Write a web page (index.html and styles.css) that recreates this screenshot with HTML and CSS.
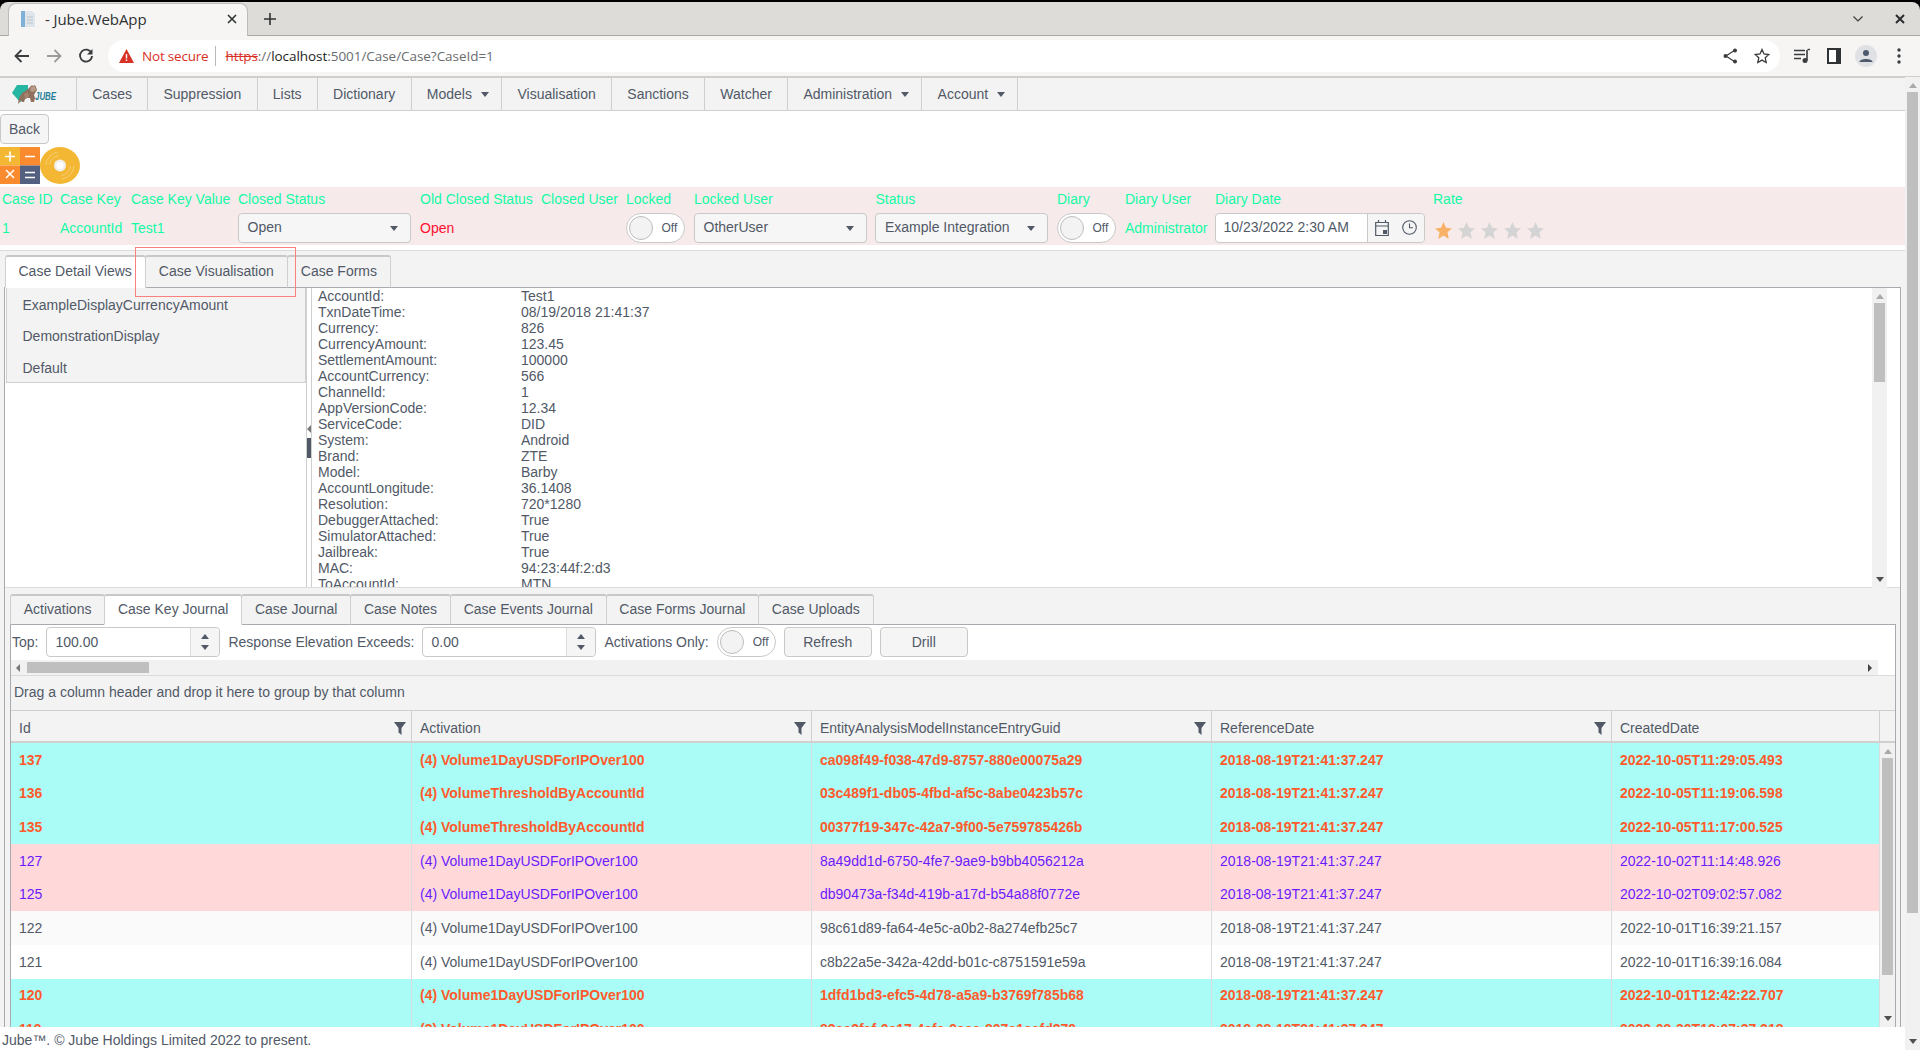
FILE: index.html
```html
<!DOCTYPE html>
<html lang="en">
<head>
<meta charset="utf-8">
<title>- Jube.WebApp</title>
<link rel="stylesheet" href="styles.css">
</head>
<body>
<header class="chrome">
  <div class="tabstrip">
    <div class="btab">
      <svg class="favicon" width="16" height="18" viewBox="0 0 16 18"><rect x="1" y="1" width="4" height="16" fill="#7fb0d8"/><path d="M5 1h7l3 3v13H5z" fill="#dfe5ea"/><path d="M7 7h6M7 10h6M7 13h6" stroke="#b9c4cd" stroke-width="1"/></svg>
      <span class="btab-title">- Jube.WebApp</span>
      <svg class="btab-close" width="10" height="10" viewBox="0 0 10 10"><path d="M1 1l8 8M9 1l-8 8" stroke="#2f3133" stroke-width="1.6"/></svg>
    </div>
    <svg class="newtab" width="12" height="12" viewBox="0 0 12 12"><path d="M6 0v12M0 6h12" stroke="#2f3133" stroke-width="1.6"/></svg>
    <svg class="win-chev" width="10" height="6" viewBox="0 0 10 6"><path d="M.5.5L5 5 9.500.5" fill="none" stroke="#3a3c3e" stroke-width="1.2"/></svg>
    <svg class="win-close" width="10" height="10" viewBox="0 0 10 10"><path d="M1 1l8 8M9 1l-8 8" stroke="#2a2c2e" stroke-width="2"/></svg>
  </div>
  <div class="toolbar">
    <span class="tbtn"><svg width="16" height="14" viewBox="0 0 16 14"><path d="M15 7H2M7.500 1L1.500 7l6 6" fill="none" stroke="#3a3c3e" stroke-width="1.800"/></svg></span>
    <span class="tbtn"><svg width="16" height="14" viewBox="0 0 16 14"><path d="M1 7h13M8.500 1l6 6-6 6" fill="none" stroke="#9a9b9c" stroke-width="1.800"/></svg></span>
    <span class="tbtn"><svg width="16" height="16" viewBox="0 0 16 16"><path d="M13.500 5.200A6 6 0 1 0 14 8" fill="none" stroke="#3a3c3e" stroke-width="1.800"/><path d="M14.500 1v5.500H9z" fill="#3a3c3e"/></svg></span>
    <div class="omnibox">
      <svg class="warn" width="15" height="14" viewBox="0 0 15 14"><path d="M7.500 0L15 14H0z" fill="#d93025"/><path d="M6.800 5h1.400v4.500H6.800zM6.800 10.500h1.400V12H6.800z" fill="#fff"/></svg>
      <span class="notsecure">Not secure</span>
      <span class="omni-sep"></span>
      <span class="url"><s class="https">https</s>://<b class="host">localhost</b>:5001/Case/Case?CaseId=1</span>
      <span class="omni-right">
        <span class="tbtn"><svg width="14" height="16" viewBox="0 0 14 16"><path d="M12 2L3 8l9 6" fill="none" stroke="#3a3c3e" stroke-width="1.200"/><circle cx="12" cy="2.500" r="2" fill="#3a3c3e"/><circle cx="2.500" cy="8" r="2" fill="#3a3c3e"/><circle cx="12" cy="13.500" r="2" fill="#3a3c3e"/></svg></span>
        <span class="tbtn"><svg width="16" height="16" viewBox="0 0 16 16"><path d="M8 1.500l2 4.500 4.800.5-3.600 3.200 1 4.800L8 12.100l-4.200 2.400 1-4.800L1.200 6.500 6 6z" fill="none" stroke="#3a3c3e" stroke-width="1.300"/></svg></span>
      </span>
    </div>
    <span class="tbtn tbtn-first"><svg width="16" height="16" viewBox="0 0 16 16"><path d="M0 2.500h11M0 6.500h11M0 10.500h7" stroke="#3a3c3e" stroke-width="1.400"/><path d="M13 2v10.500" stroke="#3a3c3e" stroke-width="1.600"/><path d="M13.500 1.500H16" stroke="#3a3c3e" stroke-width="1.400"/><circle cx="11" cy="12.500" r="2.500" fill="#3a3c3e"/></svg></span>
    <span class="tbtn"><svg width="14" height="16" viewBox="0 0 14 16"><rect width="14" height="16" fill="#2f3336"/><rect x="2" y="2" width="7" height="12" fill="#fff"/></svg></span>
    <span class="tbtn"><svg width="22" height="22" viewBox="0 0 22 22"><circle cx="11" cy="11" r="11" fill="#dfe1e5"/><circle cx="11" cy="8" r="3" fill="#4e5a6b"/><path d="M4.500 17c0-4 13-4 13 0z" fill="#4e5a6b"/></svg></span>
    <span class="tbtn tbtn-kebab"><svg width="4" height="16" viewBox="0 0 4 16"><circle cx="2" cy="2" r="1.700" fill="#3a3c3e"/><circle cx="2" cy="8" r="1.700" fill="#3a3c3e"/><circle cx="2" cy="14" r="1.700" fill="#3a3c3e"/></svg></span>
  </div>
</header>

<div class="app">
  <div class="page">
    <div class="main">
      <nav class="nav">
        <a class="nav-logo">
          <svg class="logo" width="46" height="24" viewBox="0 0 46 24">
            <path d="M0 11L5 3h11v12l-8 5z" fill="#26b7a2"/>
            <path d="M6 22l1-6 3-5 5-3 3-3 2-2 1 1 2-1 1 2 1 3-2 3-1 2 1 3-1 4h-3l-1-4-3 0-2 1-1 3h-2l-1-2-1 2z" fill="#8f6f5d"/>
            <path d="M19 5l4-1 1 4-3 2-3-1z" fill="#b99c88"/>
            <path d="M12 12l4-2 1 5-4 2z" fill="#a5836f"/>
            <text class="logo-text" x="23" y="18" textLength="21" lengthAdjust="spacingAndGlyphs">JUBE</text>
          </svg>
        </a>
        <a class="nav-item">Cases</a>
        <a class="nav-item">Suppression</a>
        <a class="nav-item">Lists</a>
        <a class="nav-item">Dictionary</a>
        <a class="nav-item">Models<i class="tri-down nav-caret"></i></a>
        <a class="nav-item">Visualisation</a>
        <a class="nav-item">Sanctions</a>
        <a class="nav-item">Watcher</a>
        <a class="nav-item">Administration<i class="tri-down nav-caret"></i></a>
        <a class="nav-item">Account<i class="tri-down nav-caret"></i></a>
      </nav>

      <button class="btn btn-back">Back</button>

      <div class="action-icons">
        <svg width="40" height="37" viewBox="0 0 40 37">
          <rect width="20" height="18.500" fill="#f3b734"/>
          <rect x="20" width="20" height="18.500" fill="#f98b2e"/>
          <rect y="18.500" width="20" height="18.500" fill="#f98b2e"/>
          <rect x="20" y="18.500" width="20" height="18.500" fill="#53607f"/>
          <path d="M5 9.500h10M10 4.500v10M25 9.500h10M6 23l8 8M14 23l-8 8M25 25.500h10M25 30.500h10" stroke="#fff" stroke-width="1.600" fill="none"/>
        </svg>
        <svg width="40" height="37" viewBox="0 0 40 37">
          <ellipse cx="20" cy="18.500" rx="20" ry="18.500" fill="#f3b734"/>
          <path d="M6 18a14 14 0 0 1 12-13M9.500 18a10.500 10.500 0 0 1 9-9.500M34 19a14 14 0 0 1-12 13M30.500 19a10.500 10.500 0 0 1-9 9.500" fill="none" stroke="#f7cf72" stroke-width="1"/>
          <circle cx="20" cy="18.500" r="6" fill="#f0efea"/>
          <circle cx="20" cy="18.500" r="3.500" fill="#fff"/>
        </svg>
      </div>

      <section class="caseband">
        <span class="lbl">Case ID</span><span class="lbl">Case Key</span><span class="lbl">Case Key Value</span><span class="lbl">Closed Status</span><span class="lbl">Old Closed Status</span><span class="lbl">Closed User</span><span class="lbl">Locked</span><span class="lbl">Locked User</span><span class="lbl">Status</span><span class="lbl">Diary</span><span class="lbl">Diary User</span><span class="lbl">Diary Date</span><span class="lbl">Rate</span>
        <span class="val">1</span>
        <span class="val">AccountId</span>
        <span class="val">Test1</span>
        <span class="cell"><span class="select">Open<i class="tri-down"></i></span></span>
        <span class="val val-red">Open</span>
        <span class="val"></span>
        <span class="cell"><span class="toggle"><i class="knob"></i>Off</span></span>
        <span class="cell"><span class="select">OtherUser<i class="tri-down"></i></span></span>
        <span class="cell"><span class="select">Example Integration<i class="tri-down"></i></span></span>
        <span class="cell"><span class="toggle"><i class="knob"></i>Off</span></span>
        <span class="val">Administrator</span>
        <span class="cell"><span class="datepick"><span class="date-text">10/23/2022 2:30 AM</span><span class="date-btns">
          <svg width="14" height="16" viewBox="0 0 14 16"><path d="M.700 2.500h12.600v13H.700zM.700 6h12.600M3.500 0v3M10.500 0v3" fill="none" stroke="#515967" stroke-width="1.200"/><rect x="8" y="10" width="4" height="4" fill="#515967"/></svg>
          <svg width="15" height="15" viewBox="0 0 15 15"><circle cx="7.500" cy="7.500" r="6.800" fill="none" stroke="#515967" stroke-width="1.100"/><path d="M7.500 3.500v4.300h3.500" fill="none" stroke="#515967" stroke-width="1.100"/></svg>
        </span></span></span>
        <span class="cell stars">
          <svg class="star star-on" viewBox="0 0 20 20"><path d="M10 0l3 6.800 7 .7-5.300 4.700L16.200 20 10 15.900 3.800 20l1.500-7.800L0 7.500l7-.7z"/></svg>
          <svg class="star" viewBox="0 0 20 20"><path d="M10 0l3 6.800 7 .7-5.300 4.700L16.200 20 10 15.900 3.800 20l1.500-7.800L0 7.500l7-.7z"/></svg>
          <svg class="star" viewBox="0 0 20 20"><path d="M10 0l3 6.800 7 .7-5.300 4.700L16.200 20 10 15.900 3.800 20l1.500-7.800L0 7.500l7-.7z"/></svg>
          <svg class="star" viewBox="0 0 20 20"><path d="M10 0l3 6.800 7 .7-5.300 4.700L16.200 20 10 15.900 3.800 20l1.500-7.800L0 7.500l7-.7z"/></svg>
          <svg class="star" viewBox="0 0 20 20"><path d="M10 0l3 6.800 7 .7-5.300 4.700L16.200 20 10 15.900 3.800 20l1.500-7.800L0 7.500l7-.7z"/></svg>
        </span>
      </section>

      <section class="outer-tabs">
        <div class="annotation"></div>
        <div class="tabs">
          <a class="tab tab-active">Case Detail Views</a>
          <a class="tab">Case Visualisation</a>
          <a class="tab">Case Forms</a>
        </div>
        <div class="tabbox">
          <div class="detail">
            <div class="views-pane">
              <ul class="views">
                <li>ExampleDisplayCurrencyAmount</li>
                <li>DemonstrationDisplay</li>
                <li>Default</li>
              </ul>
            </div>
            <div class="splitter"><i class="tri-left"></i><i class="handle"></i></div>
            <dl class="fields">
              <dt>AccountId:</dt><dd>Test1</dd>
              <dt>TxnDateTime:</dt><dd>08/19/2018 21:41:37</dd>
              <dt>Currency:</dt><dd>826</dd>
              <dt>CurrencyAmount:</dt><dd>123.45</dd>
              <dt>SettlementAmount:</dt><dd>100000</dd>
              <dt>AccountCurrency:</dt><dd>566</dd>
              <dt>ChannelId:</dt><dd>1</dd>
              <dt>AppVersionCode:</dt><dd>12.34</dd>
              <dt>ServiceCode:</dt><dd>DID</dd>
              <dt>System:</dt><dd>Android</dd>
              <dt>Brand:</dt><dd>ZTE</dd>
              <dt>Model:</dt><dd>Barby</dd>
              <dt>AccountLongitude:</dt><dd>36.1408</dd>
              <dt>Resolution:</dt><dd>720*1280</dd>
              <dt>DebuggerAttached:</dt><dd>True</dd>
              <dt>SimulatorAttached:</dt><dd>True</dd>
              <dt>Jailbreak:</dt><dd>True</dd>
              <dt>MAC:</dt><dd>94:23:44f:2:d3</dd>
              <dt>ToAccountId:</dt><dd>MTN</dd>
            </dl>
            <div class="vbar vbar-detail"><i class="tri-up tri-pale"></i><i class="thumb thumb-detail"></i><i class="tri-down tri-end"></i></div>
          </div>

          <div class="journal">
            <div class="tabs tabs-nested">
              <a class="tab">Activations</a>
              <a class="tab tab-active">Case Key Journal</a>
              <a class="tab">Case Journal</a>
              <a class="tab">Case Notes</a>
              <a class="tab">Case Events Journal</a>
              <a class="tab">Case Forms Journal</a>
              <a class="tab">Case Uploads</a>
            </div>
            <div class="journal-box">
              <div class="jtools">
                <label>Top:</label>
                <span class="numeric"><span class="num-text">100.00</span><span class="spin"><i class="tri-up"></i><i class="tri-down"></i></span></span>
                <label>Response Elevation Exceeds:</label>
                <span class="numeric"><span class="num-text">0.00</span><span class="spin"><i class="tri-up"></i><i class="tri-down"></i></span></span>
                <label>Activations Only:</label>
                <span class="toggle"><i class="knob"></i>Off</span>
                <button class="btn btn-wide">Refresh</button>
                <button class="btn btn-wide">Drill</button>
              </div>
              <div class="hbar"><i class="tri-left"></i><i class="thumb-h"></i><i class="tri-right"></i></div>
              <div class="grouphint">Drag a column header and drop it here to group by that column</div>
              <div class="ghead">
                <span class="gh">Id<svg class="filter" viewBox="0 0 12 13"><path d="M0 0h12L7.500 6v7l-3-2.500V6z"/></svg></span>
                <span class="gh">Activation<svg class="filter" viewBox="0 0 12 13"><path d="M0 0h12L7.500 6v7l-3-2.500V6z"/></svg></span>
                <span class="gh">EntityAnalysisModelInstanceEntryGuid<svg class="filter" viewBox="0 0 12 13"><path d="M0 0h12L7.500 6v7l-3-2.500V6z"/></svg></span>
                <span class="gh">ReferenceDate<svg class="filter" viewBox="0 0 12 13"><path d="M0 0h12L7.500 6v7l-3-2.500V6z"/></svg></span>
                <span class="gh">CreatedDate</span>
                <span class="gh-end"></span>
              </div>
              <div class="gbody">
                <div class="rows">
                  <div class="row row-teal"><span>137</span><span>(4) Volume1DayUSDForIPOver100</span><span>ca098f49-f038-47d9-8757-880e00075a29</span><span>2018-08-19T21:41:37.247</span><span>2022-10-05T11:29:05.493</span></div>
                  <div class="row row-teal"><span>136</span><span>(4) VolumeThresholdByAccountId</span><span>03c489f1-db05-4fbd-af5c-8abe0423b57c</span><span>2018-08-19T21:41:37.247</span><span>2022-10-05T11:19:06.598</span></div>
                  <div class="row row-teal"><span>135</span><span>(4) VolumeThresholdByAccountId</span><span>00377f19-347c-42a7-9f00-5e759785426b</span><span>2018-08-19T21:41:37.247</span><span>2022-10-05T11:17:00.525</span></div>
                  <div class="row row-pink"><span>127</span><span>(4) Volume1DayUSDForIPOver100</span><span>8a49dd1d-6750-4fe7-9ae9-b9bb4056212a</span><span>2018-08-19T21:41:37.247</span><span>2022-10-02T11:14:48.926</span></div>
                  <div class="row row-pink"><span>125</span><span>(4) Volume1DayUSDForIPOver100</span><span>db90473a-f34d-419b-a17d-b54a88f0772e</span><span>2018-08-19T21:41:37.247</span><span>2022-10-02T09:02:57.082</span></div>
                  <div class="row row-alt"><span>122</span><span>(4) Volume1DayUSDForIPOver100</span><span>98c61d89-fa64-4e5c-a0b2-8a274efb25c7</span><span>2018-08-19T21:41:37.247</span><span>2022-10-01T16:39:21.157</span></div>
                  <div class="row"><span>121</span><span>(4) Volume1DayUSDForIPOver100</span><span>c8b22a5e-342a-42dd-b01c-c8751591e59a</span><span>2018-08-19T21:41:37.247</span><span>2022-10-01T16:39:16.084</span></div>
                  <div class="row row-teal"><span>120</span><span>(4) Volume1DayUSDForIPOver100</span><span>1dfd1bd3-efc5-4d78-a5a9-b3769f785b68</span><span>2018-08-19T21:41:37.247</span><span>2022-10-01T12:42:22.707</span></div>
                  <div class="row row-teal"><span>119</span><span>(3) Volume1DayUSDForIPOver100</span><span>82ee2faf-0e17-4afa-9aee-807e1aafd279</span><span>2018-08-19T21:41:37.247</span><span>2022-09-30T12:07:37.218</span></div>
                </div>
                <div class="vbar vbar-grid"><i class="tri-up tri-pale"></i><i class="thumb thumb-grid"></i><i class="tri-down tri-end"></i></div>
              </div>
            </div>
          </div>
        </div>
      </section>
    </div>
    <footer class="footer">Jube™. © Jube Holdings Limited 2022 to present.</footer>
  </div>
  <div class="vbar vbar-page"><i class="tri-up tri-pale"></i><i class="thumb thumb-page"></i><i class="tri-down tri-end"></i></div>
</div>
</body>
</html>
```

FILE: styles.css
```css
* { box-sizing: border-box; }
html, body { margin: 0; height: 100%; }
body {
  width: 1920px; height: 1050px; overflow: hidden;
  display: flex; flex-direction: column;
  font: 14px/16px "Liberation Sans", Arial, sans-serif;
  color: #515967; background: #fff;
}
i { display: block; flex: none; }

/* triangles */
.tri-up, .tri-down, .tri-left, .tri-right { width: 0; height: 0; border-style: solid; border-color: transparent; }
.tri-up { border-width: 0 4px 5px; border-bottom-color: #515967; }
.tri-down { border-width: 5px 4px 0; border-top-color: #515967; }
.tri-left { border-width: 4px 4px 4px 0; border-right-color: #777; }
.tri-right { border-width: 4px 0 4px 4px; border-left-color: #444; }
.tri-pale { border-bottom-color: #aaa; }
.tri-end { border-top-color: #505050; margin-top: auto; }

/* browser chrome */
.chrome { height: 77px; flex: none; background: #000; padding-top: 2px; }
.tabstrip {
  height: 34px; background: #dedcd8; border-bottom: 1px solid #a9a8a4;
  border-radius: 8px 8px 0 0; padding-left: 8px; display: flex; align-items: center;
}
.btab {
  width: 240px; height: 33px; margin-top: 1px; background: #f6f5f4; border: 1px solid #bdbbb7; border-bottom: 0;
  border-radius: 8px 8px 0 0; display: flex; align-items: center; padding: 0 0 2px 11px;
}
.favicon { flex: none; }
.btab-title { margin-left: 9px; font: 15px/16px "Open Sans", sans-serif; color: #2f3133; letter-spacing: -.1px; flex: 1; }
.btab-close { margin-right: 10px; flex: none; }
.newtab { margin-left: 16px; flex: none; }
.win-chev { margin-left: auto; margin-right: 32px; }
.win-close { margin-right: 15.500px; }
.toolbar { height: 41px; background: #f6f5f4; border-bottom: 1px solid #d0cecb; display: flex; align-items: center; padding: 0 6px; }
.tbtn { width: 32px; height: 32px; flex: none; display: flex; align-items: center; justify-content: center; }
.tbtn-first { margin-left: 6px; }
.tbtn-kebab { margin-left: 1px; }
.omnibox {
  width: 1672px; height: 32px; margin-left: 6px; background: #fff; border-radius: 16px;
  display: flex; align-items: center; padding: 0 2px 0 11px; flex: none;
  font: 13.500px/16px "Open Sans", sans-serif; letter-spacing: -.12px;
}
.warn { flex: none; }
.notsecure { margin-left: 8px; color: #d93025; letter-spacing: -.2px; }
.omni-sep { width: 1px; height: 20px; background: #b9b9b9; margin: 0 9px 0 7px; }
.url { color: #6a6d70; letter-spacing: -.05px; }
.https { color: #d93025; }
.host { color: #1d1f21; font-weight: 400; }
.omni-right { margin-left: auto; display: flex; }

/* page shell */
.app { flex: 1; min-height: 0; display: flex; }
.page { width: 1905px; flex: none; display: flex; flex-direction: column; min-height: 0; }
.main { height: 950px; flex: none; overflow: hidden; }
.footer { height: 23px; flex: none; padding: 5px 0 0 2px; }

/* scrollbars */
.vbar { width: 15px; flex: none; background: #f1f1f1; display: flex; flex-direction: column; align-items: center; }
.thumb { width: 11px; background: #bfbfbf; }
.vbar-page { padding: 6px 0 6px; }
.thumb-page { height: 821px; margin-top: 4px; width: 11px; }
.vbar-detail { height: 300px; margin-right: 13px; padding: 6px 0 6px; }
.thumb-detail { height: 79px; margin-top: 4px; }
.vbar-grid { height: 284px; padding: 6px 0 6px; }
.thumb-grid { height: 217px; margin-top: 4px; }

/* nav */
.nav { height: 34px; background: #f3f3f3; border: 1px solid #cfcfcf; border-width: 1px 0; display: flex; }
.nav a { display: flex; align-items: center; border-right: 1px solid #cfcfcf; flex: none; }
.nav-logo { width: 77px; padding-left: 12px; }
.logo { overflow: visible; }
.logo-text { font: italic bold 11px "Liberation Sans", sans-serif; fill: #1f7f98; }
.nav-item { padding: 0 15.250px; }
.nav-caret { margin: 0 -3px 0 9px; }

/* buttons */
.btn {
  font: inherit; color: inherit; background: #f5f5f5; border: 1px solid #c9c9c9; border-radius: 4px;
  height: 30px; padding: 0; flex: none;
}
.btn-back { width: 49px; display: block; margin-top: 3px; }
.btn-wide { width: 88px; }
.action-icons { display: flex; height: 37px; margin-top: 3px; }

/* case band */
.caseband {
  height: 58px; margin-top: 3px; background: #f7eaea; color: #14fba6;
  display: grid; grid-template-columns: 58px 71px 107px 182px 121px 85px 68px 181.500px 181.500px 68px 90px 218px 1fr;
  grid-template-rows: 24px 34px;
}
.lbl { padding: 4px 0 0 2px; white-space: nowrap; }
.val { padding-left: 2px; align-self: center; white-space: nowrap; }
.val-red { color: #ff0f2f; }
.cell { align-self: center; padding-left: 1.500px; color: #515967; display: flex; }
.select {
  width: 173px; height: 30px; background: #f6f6f6; border: 1px solid #c9c9c9; border-radius: 4px;
  display: flex; align-items: center; justify-content: space-between; padding: 0 12px 2px 9px; margin-top: -1px;
}
.select .tri-down { margin-top: 3px; }
.toggle {
  width: 59px; height: 30px; flex: none; background: #fff; border: 1px solid #c9c9c9; border-radius: 15px;
  display: flex; align-items: center; font-size: 12px; padding-left: 2px; gap: 9px;
}
.knob { width: 24px; height: 24px; border-radius: 50%; background: #f3f3f3; border: 1px solid #bdbdbd; }
.datepick { width: 210px; height: 30px; background: #fff; border: 1px solid #c9c9c9; border-radius: 4px; display: flex; margin-top: -1px; }
.date-text { width: 152px; padding-left: 8px; line-height: 26px; border-right: 1px solid #c9c9c9; flex: none; }
.date-btns { flex: 1; background: #f5f5f5; display: flex; align-items: center; justify-content: space-between; padding: 0 7px; border-radius: 0 4px 4px 0; }
.stars { gap: 6px; padding-left: 4px; margin-top: 4px; }
.star { width: 17px; height: 17px; fill: #d4d4d4; flex: none; }
.star-on { fill: #f7b267; }

/* tabs */
.outer-tabs { position: relative; margin-top: 5px; height: 777px; background: #f3f3f3; border-top: 1px solid #dcdcdc; padding: 4px 4px 0; width: 1905px; }
.annotation { position: absolute; left: 134.500px; top: -4px; width: 161.500px; height: 50px; border: 1.500px solid #fb7f7f; z-index: 2; }
.tabs { display: flex; height: 32px; padding-left: .5px; align-items: flex-start; position: relative; z-index: 1; }
.tab {
  display: flex; align-items: center; padding: 0 13px 3px; height: 33px; background: #f3f3f3;
  border: 1px solid #cfcfcf; border-top: 2px solid #c8c8c8; border-bottom: 1px solid #a9a9b0; border-radius: 3px 3px 0 0;
  white-space: nowrap; margin-right: -1px; position: relative;
}
.tab-active { background: #fff; border-bottom-color: #fff; z-index: 1; }
.tabbox { border: 1px solid #a9a9b0; border-bottom: 0; width: 1897px; height: 740px; background: #f3f3f3; }
.detail { display: flex; height: 300px; background: #fff; border-bottom: 1px solid #dcdcdc; }
.views-pane { width: 301px; flex: none; padding-left: 1px; }
.views { list-style: none; margin: 0; height: 95px; padding: 1px 0 0 15.500px; background: #f3f3f3; border: 1px solid #cfcfcf; border-top: 0; }
.views li { height: 31.500px; display: flex; align-items: center; }
.splitter { width: 6px; flex: none; border-left: 1px solid #cfcfcf; border-right: 1px solid #cfcfcf; display: flex; flex-direction: column; justify-content: center; align-items: center; gap: 5px; padding-top: 8px; }
.handle { width: 4px; height: 20px; background: #515967; }
.fields { flex: 1; margin: 0; padding-left: 6px; display: grid; grid-template-columns: 203px 1fr; grid-auto-rows: 16px; overflow: hidden; }
.fields dt, .fields dd { margin: 0; }

/* journal */
.journal { padding: 6px 4px 0 5px; }
.tabs-nested { height: 30px; padding-left: 0; }
.tabs-nested .tab { padding: 0 12.750px 3px; height: 31px; }
.journal-box { width: 1886px; border: 1px solid #a9a9b0; border-bottom: 0; background: #fff; height: 500px; }
.jtools { height: 35px; display: flex; align-items: center; gap: 8px; padding: 0 0 1px 1px; }
.jtools label { white-space: nowrap; }
.numeric { width: 174px; height: 30px; border: 1px solid #c9c9c9; border-radius: 4px; display: flex; flex: none; background: #fff; }
.num-text { flex: 1; line-height: 28px; padding-left: 8px; }
.spin { width: 29px; flex: none; background: #f5f5f5; border-left: 1px solid #dcdcdc; display: flex; flex-direction: column; align-items: center; justify-content: center; gap: 6px; border-radius: 0 4px 4px 0; }
.hbar { width: 1867px; height: 15px; background: #f1f1f1; display: flex; align-items: center; padding: 0 6px 0 5px; }
.thumb-h { width: 122px; height: 11px; background: #bfbfbf; margin-left: 7px; }
.hbar .tri-right { margin-left: auto; }
.grouphint { height: 36px; background: #f3f3f3; border-top: 1px solid #dcdcdc; border-bottom: 1px solid #cfcfcf; padding-left: 3px; line-height: 33px; }
.ghead, .row { display: grid; grid-template-columns: 401px 400px 400px 400px 268px; }
.ghead { height: 32px; background: #f3f3f3; border-bottom: 2px solid #cfcfcf; grid-template-columns: 401px 400px 400px 400px 268px 15px; }
.gh { display: flex; align-items: center; justify-content: space-between; padding: 4px 5px 0 8px; border-right: 1px solid #cfcfcf; }
.filter { width: 12px; height: 13px; fill: #515967; flex: none; }
.gbody { display: flex; height: 284px; }
.rows { width: 1869px; flex: none; overflow: hidden; }
.row { height: 33.670px; }
.row span { display: flex; align-items: center; padding-left: 8px; border-right: 1px solid #dcdcdc; white-space: nowrap; }
.row-teal { background: #aafcf6; color: #ff5a2c; font-weight: 700; }
.row-pink { background: #ffd9d9; color: #6a1bff; }
.row-alt { background: #fafafa; }
```
